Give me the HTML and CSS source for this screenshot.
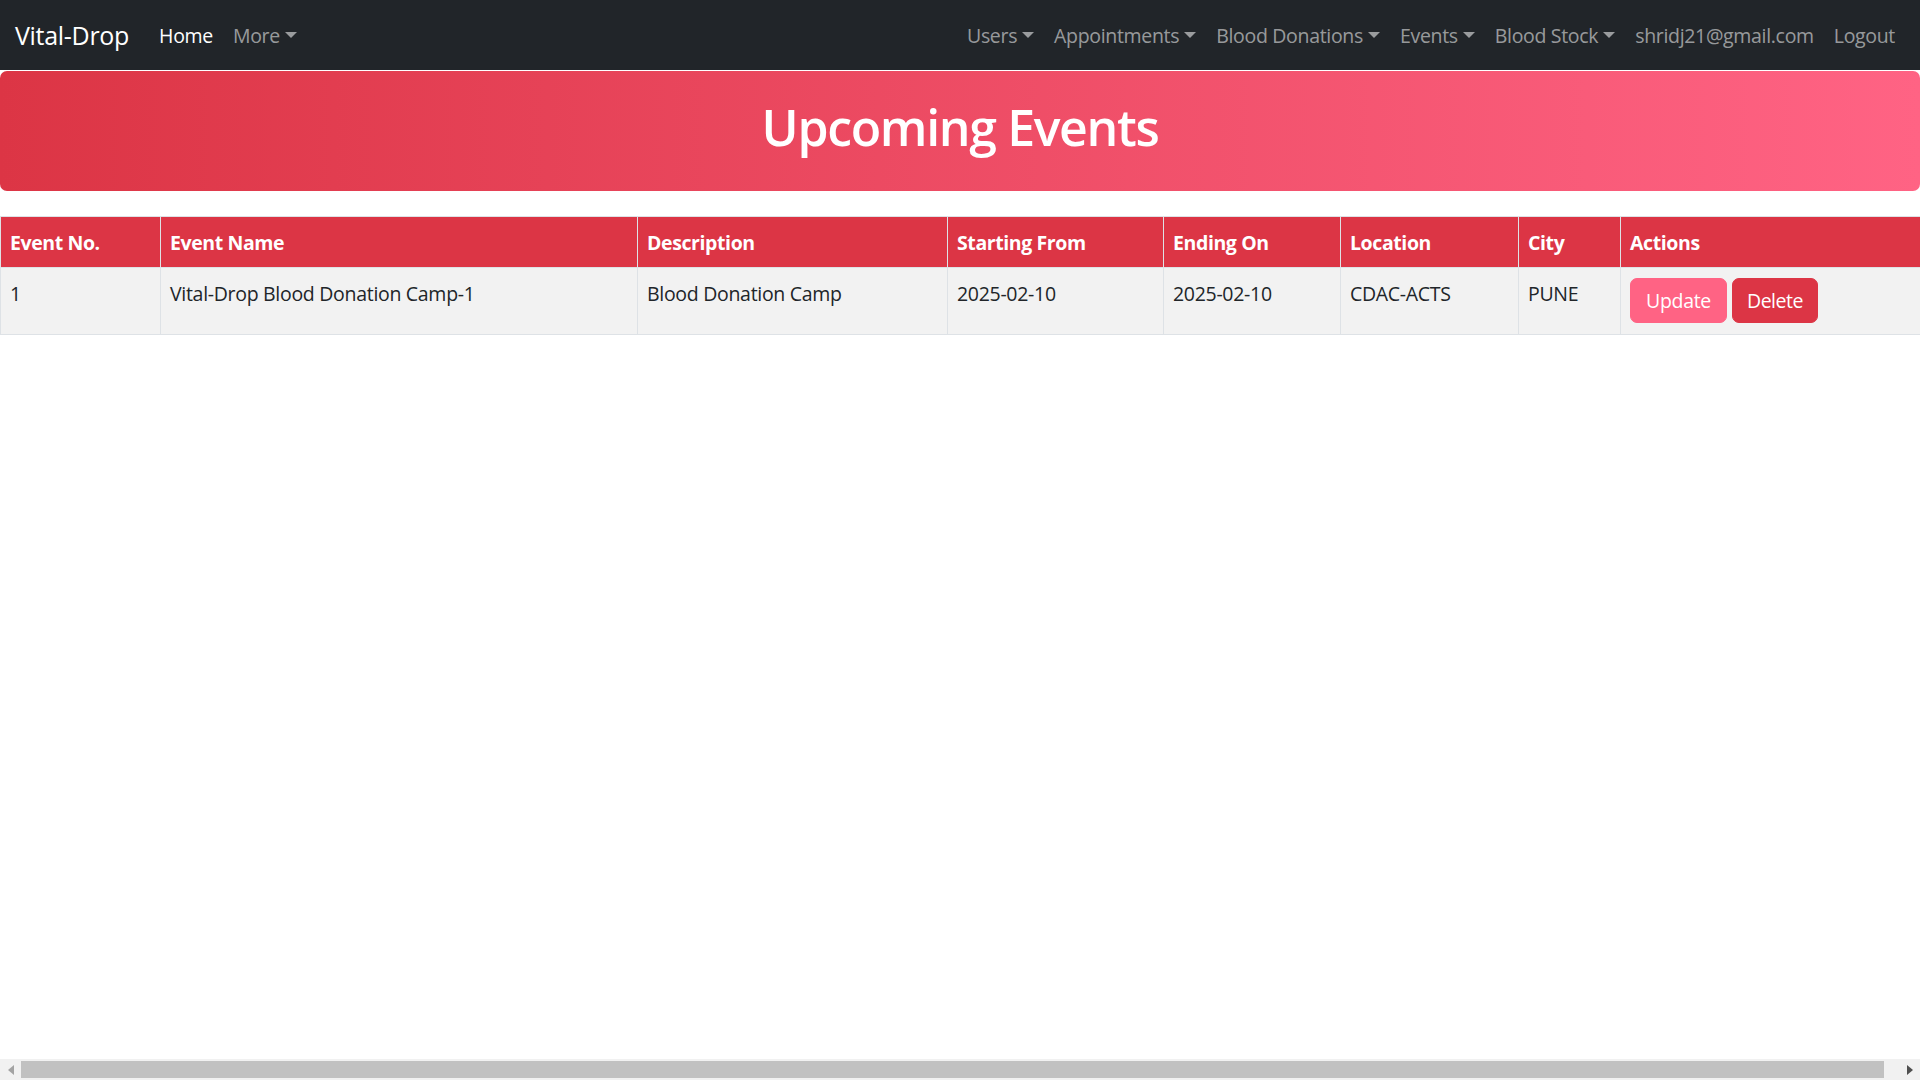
FILE: index.html
```html
<!DOCTYPE html>
<html lang="en">
<head>
<meta charset="utf-8">
<title>Vital-Drop - Upcoming Events</title>
<link rel="stylesheet" href="styles.css">
</head>
<body>
<nav class="navbar">
  <a class="brand" href="#">Vital-Drop</a>
  <ul class="nav">
    <li><a class="nav-link active" href="#">Home</a></li>
    <li><a class="nav-link caret" href="#">More</a></li>
  </ul>
  <ul class="nav nav-right">
    <li><a class="nav-link caret" href="#">Users</a></li>
    <li><a class="nav-link caret" href="#">Appointments</a></li>
    <li><a class="nav-link caret" href="#">Blood Donations</a></li>
    <li><a class="nav-link caret" href="#">Events</a></li>
    <li><a class="nav-link caret" href="#">Blood Stock</a></li>
    <li><a class="nav-link" href="#">shridj21@gmail.com</a></li>
    <li><a class="nav-link" href="#">Logout</a></li>
  </ul>
</nav>

<header class="banner">
  <h1 class="banner-title">Upcoming Events</h1>
</header>

<table class="events">
  <colgroup>
    <col class="c-no">
    <col class="c-name">
    <col class="c-desc">
    <col class="c-start">
    <col class="c-end">
    <col class="c-loc">
    <col class="c-city">
    <col class="c-act">
  </colgroup>
  <thead>
    <tr>
      <th>Event No.</th>
      <th>Event Name</th>
      <th>Description</th>
      <th>Starting From</th>
      <th>Ending On</th>
      <th>Location</th>
      <th>City</th>
      <th>Actions</th>
    </tr>
  </thead>
  <tbody>
    <tr>
      <td>1</td>
      <td>Vital-Drop Blood Donation Camp-1</td>
      <td>Blood Donation Camp</td>
      <td>2025-02-10</td>
      <td>2025-02-10</td>
      <td>CDAC-ACTS</td>
      <td>PUNE</td>
      <td class="actions-cell">
        <div class="actions">
          <button class="btn btn-update">Update</button>
          <button class="btn btn-delete">Delete</button>
        </div>
      </td>
    </tr>
  </tbody>
</table>

<div class="hscroll">
  <svg class="arrow arrow-left" width="6" height="10" viewBox="0 0 6 10"><polygon points="6,0 6,10 0,5" fill="#a3a3a3"/></svg>
  <div class="thumb"></div>
  <svg class="arrow arrow-right" width="6" height="10" viewBox="0 0 6 10"><polygon points="0,0 0,10 6,5" fill="#505050"/></svg>
</div>
</body>
</html>
```

FILE: styles.css
```css
* { box-sizing: border-box; }

html, body {
  margin: 0;
  padding: 0;
  overflow: hidden;
  height: 100%;
}

body {
  font-family: "Open Sans", "Noto Sans", "Liberation Sans", sans-serif;
  font-size: 20px;
  line-height: 1.5;
  color: #212529;
  background: #fff;
}

a { text-decoration: none; }

.navbar {
  display: flex;
  align-items: center;
  height: 70px;
  padding: 0 15px;
  background: #212529;
}

.brand {
  font-size: 25px;
  line-height: 37.5px;
  color: #fff;
  margin-right: 20px;
  letter-spacing: -0.3px;
  padding-top: 2px;
}

.nav {
  display: flex;
  list-style: none;
  margin: 0;
  padding: 0;
}

.nav-right { margin-left: auto; }

.nav-link {
  display: block;
  padding: 11px 10px 9px;
  line-height: 30px;
  font-size: 19.5px;
  color: rgba(255, 255, 255, 0.55);
  letter-spacing: -0.32px;
}

.nav-link.active { color: #fff; }

.caret::after {
  content: "";
  display: inline-block;
  margin-left: 5px;
  vertical-align: 5px;
  border-top: 6px solid;
  border-right: 6px solid transparent;
  border-left: 6px solid transparent;
  border-bottom: 0;
}

.banner {
  margin-top: 1px;
  padding: 26px 0 34px;
  border-radius: 7px;
  background: linear-gradient(to right, #dc3545, #ff6384);
  text-align: center;
}

.banner-title {
  margin: 0;
  font-size: 50px;
  line-height: 60px;
  font-weight: 600;
  color: #fff;
  letter-spacing: -1.35px;
}

.events {
  width: 100%;
  margin-top: 25px;
  border-collapse: collapse;
  table-layout: fixed;
}

.c-no { width: 160px; }
.c-name { width: 477px; }
.c-desc { width: 310px; }
.c-start { width: 216px; }
.c-end { width: 177px; }
.c-loc { width: 178px; }
.c-city { width: 102px; }
.c-act { width: 300px; }

.events th,
.events td {
  border: 1px solid #dee2e6;
  padding: 11px 9px 9px;
  text-align: left;
  vertical-align: top;
  white-space: nowrap;
  line-height: 30px;
}

.events th {
  background: #dc3545;
  color: #fff;
  font-weight: 700;
  font-size: 19.5px;
  letter-spacing: -0.4px;
}

.events td {
  background: #f2f2f2;
  font-size: 19.5px;
  letter-spacing: -0.3px;
}

.events td.actions-cell {
  padding: 10px 9px 11px;
}

.actions {
  display: flex;
  gap: 5px;
}

.btn {
  font-family: inherit;
  font-size: 19.5px;
  line-height: 30px;
  padding: 7px 15px 6px;
  border: 1px solid transparent;
  border-radius: 7px;
  color: #fff;
  letter-spacing: -0.3px;
  cursor: pointer;
}

.btn-update { background: #ff6384; border-color: #ff6384; }
.btn-delete { background: #dc3545; border-color: #dc3545; padding-left: 14px; padding-right: 14px; letter-spacing: -0.5px; }

.hscroll {
  position: fixed;
  left: 0;
  right: 0;
  bottom: 0;
  height: 21px;
  background: #f1f1f1;
  display: flex;
  align-items: center;
}

.arrow { flex: none; }
.arrow-left { margin-left: 8px; }
.arrow-right { margin-left: 23px; }

.thumb {
  margin-left: 7px;
  width: 1863px;
  height: 17px;
  background: #c1c1c1;
}
```
